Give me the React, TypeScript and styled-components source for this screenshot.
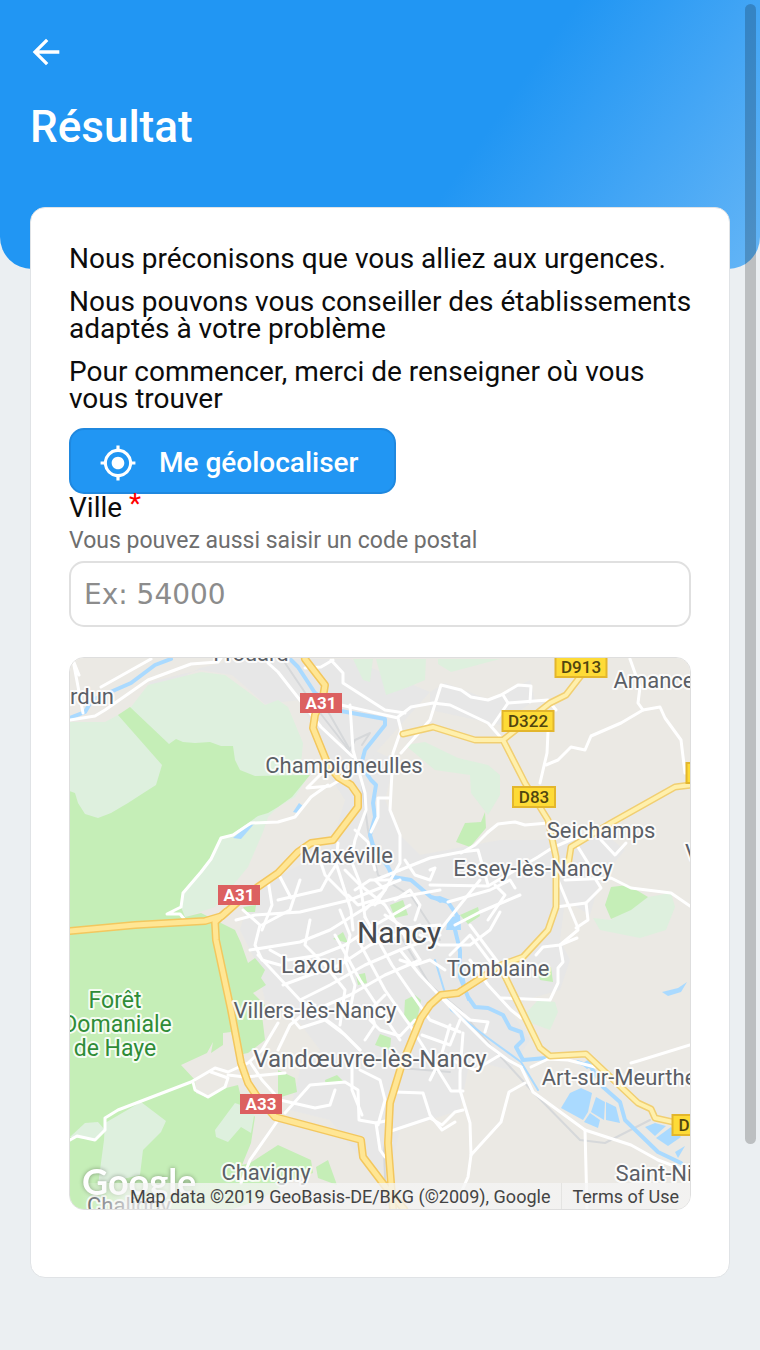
import React from "react";
import styled, { createGlobalStyle } from "styled-components";
import { MdArrowBack, MdMyLocation } from "react-icons/md";

const GlobalStyle = createGlobalStyle`
  *, *::before, *::after { box-sizing: border-box; }
  body {
    margin: 0;
    background: #ebeff2;
    color: #0c0c0c;
    font-family: Roboto, "Liberation Sans", sans-serif;
    overflow-x: hidden;
    scrollbar-width: none;
  }
`;

const Page = styled.div`
  min-height: 100vh;
  padding-bottom: 73px;
`;

const Header = styled.header`
  height: 269px;
  padding: 32px 30px 0;
  border-radius: 0 0 32px 32px;
  background: linear-gradient(125deg, #2196f3 0%, #2196f3 61%, #42a5f5 80%, #64b5f6 100%);
  color: #fff;
`;

const BackButton = styled.button`
  display: flex;
  margin: 0 0 0 -4px;
  padding: 0;
  border: 0;
  background: none;
  color: inherit;
  font-size: 40px;
  cursor: pointer;
`;

const Title = styled.h1`
  margin: 29px 0 0;
  font-size: 44px;
  line-height: 52px;
  font-weight: 500;
`;

const Card = styled.main`
  margin: -62px 30px 0;
  padding: 37px 38px 67px;
  border: 1px solid #e0e3e6;
  border-radius: 15px;
  background: #fff;
`;

const Paragraph = styled.p`
  margin: 0 -8px 16px 0;
  font-size: 28px;
  line-height: 27px;
`;

const LocateButton = styled.button`
  display: flex;
  align-items: center;
  gap: 22px;
  height: 66px;
  padding: 4px 35px 0 28px;
  border: 2px solid #1f88df;
  border-radius: 15px;
  background: #2196f3;
  color: #fff;
  font: 500 28px/32px Roboto, sans-serif;
  cursor: pointer;

  svg { font-size: 38px; }
`;

const Field = styled.div`
  display: flex;
  flex-direction: column;
`;

const Label = styled.label`
  font-size: 28px;
  line-height: 28px;
`;

const Required = styled.span`
  color: #f00;
  line-height: 0;
  vertical-align: 4px;
`;

const Hint = styled.span`
  margin: 4px 0 5px;
  color: #6e6e6e;
  font-size: 23px;
  line-height: 30px;
`;

const CityInput = styled.input`
  width: 100%;
  height: 66px;
  padding: 0 13px;
  border: 2px solid #e0e0e0;
  border-radius: 15px;
  background: #fff;
  color: #222;
  font: 28px "DejaVu Sans", sans-serif;

  &::placeholder { color: #8c8c8c; opacity: 1; }
`;

const MapFrame = styled.div`
  position: relative;
  height: 553px;
  margin-top: 30px;
  border: 1px solid #dedede;
  border-radius: 15px;
  overflow: hidden;
`;

const MapDrawing = styled.svg`
  display: block;
  width: 100%;
  height: 100%;
  font-family: Roboto, sans-serif;
`;

const Attribution = styled.div`
  position: absolute;
  right: 0;
  bottom: 0;
  display: flex;
  background: linear-gradient(90deg, rgba(245, 245, 245, 0), rgba(245, 245, 245, 0.75) 50px);
  color: #444;
  font-size: 18px;
  line-height: 24px;
  white-space: nowrap;
`;

const Credit = styled.span`
  padding: 2px 11px 0 50px;
`;

const TermsLink = styled.a`
  padding: 2px 11px 0 10px;
  border-left: 1px solid #e4e4e2;
  color: inherit;
  text-decoration: none;
`;

const ScrollThumb = styled.div`
  position: fixed;
  top: 4px;
  right: 4px;
  width: 11px;
  height: calc(100vh - 210px);
  border-radius: 6px;
  background: rgba(0, 0, 0, 0.2);
`;

const urban = [
  "330,730 395,760 385,800 400,835 420,855 500,840 540,840 600,830 625,850 600,880 590,915 565,900 560,940 570,960 560,990 525,1000 510,1010 530,1040 510,1070 470,1060 460,1110 400,1130 390,1170 370,1170 330,1120 290,1110 300,1070 320,1050 290,1010 265,1000 255,960 240,930 250,895 290,870 330,850 345,800 320,760",
  "140,700 200,668 240,659 350,659 430,692 405,720 360,770 330,765 300,700 265,704 232,675 200,670 150,682",
  "430,692 445,683 490,700 530,680 535,700 500,725 430,710",
];

const paleWoods = [
  "69,722 105,722 118,715 131,707 148,685 201,672 225,675 255,697 265,705 278,700 288,707 303,743 301,765 309,775 295,797 278,807 268,817 263,832 248,867 215,907 185,917 69,930",
  "353,659 363,680 370,682 373,659",
  "376,659 386,695 406,688 425,680 426,659",
  "438,664 451,672 500,659 438,659",
  "405,745 425,742 458,758 488,765 500,775 500,795 488,815 471,793 470,775 435,770",
  "593,918 611,920 648,897 671,893 675,907 666,930 640,938 600,930",
  "526,1013 538,1000 555,1002 558,1012 550,1030 531,1023",
];

const woods = [
  "118,715 130,707 169,744 176,739 183,742 195,743 210,742 221,746 233,746 235,760 240,770 255,776 310,775 292,797 278,807 268,813 258,816 231,835 221,838 211,860 183,893 181,907 185,917 201,913 215,920 235,930 241,943 248,963 255,958 265,970 261,978 266,985 253,993 265,1005 262,1015 265,1040 248,1053 238,1055 231,1032 223,1033 223,1045 211,1053 213,1042 207,1053 181,1065 195,1080 196,1093 208,1098 218,1090 238,1085 241,1097 255,1117 251,1143 242,1165 250,1163 278,1145 311,1160 313,1173 291,1180 260,1200 230,1210 69,1210 69,791 75,793 78,803 85,814 98,818 111,813 128,803 145,792 156,785 162,765",
  "456,842 465,823 481,822 485,812 486,828 470,847",
  "605,905 611,887 628,885 648,897 631,910 611,919",
  "390,905 403,900 408,915 395,918",
  "460,915 478,907 480,916 468,924",
  "405,1000 415,995 421,1000 416,1027 404,1017",
  "356,975 365,973 367,983 358,985",
  "375,1045 380,1034 391,1038 390,1050",
  "278,1070 295,1078 297,1092 278,1098",
  "325,1080 337,1075 343,1081 326,1085",
  "316,1167 328,1160 337,1185 318,1178",
  "538,973 551,967 553,982 540,980",
  "243,907 256,905 255,912 246,912",
  "333,939 343,932 348,943",
];

const clearings = [
  "105,1123 141,1102 166,1121 161,1132 143,1150 140,1175 98,1185 104,1140",
  "70,1137 85,1123 98,1122 105,1130 95,1140",
  "215,1130 235,1103 255,1110 251,1133 241,1127 228,1142 216,1137",
];

const lakes = [
  "561,1108 570,1093 581,1088 592,1093 588,1112 583,1120",
  "596,1097 605,1102 604,1120 591,1112",
  "606,1102 616,1107 620,1123 606,1120",
  "590,1113 600,1120 598,1128 584,1122",
  "645,1127 655,1123 666,1126 655,1136",
  "656,1138 671,1127 681,1137 668,1146",
  "662,992 678,988 687,982 681,992 668,996",
  "581,1064 588,1060 594,1065 587,1069",
  "233,838 246,827 254,824 241,839",
  "293,812 299,803 303,806 297,813",
  "446,930 448,918 460,915 461,930",
  "675,1152 685,1146 678,1158",
  "431,897 440,896 450,900 440,903",
];

const rivers = [
  "70,718 85,712 92,700 115,690 131,683 155,665 171,659",
  "291,660 298,667 315,693 341,711 385,719 385,725 365,750 361,765 371,780 376,785 373,803 375,817 370,835 373,845 388,867 393,877 411,880 431,897 448,902 458,917 455,930 460,950 460,977 468,997 475,1007 488,1008 503,1015 510,1028 521,1032 523,1040 516,1047 523,1060 546,1058",
  "578,1062 591,1067 603,1087 620,1102 625,1120 658,1152 681,1163",
];

const canals = [
  "435,960 445,993 451,1010 488,1038 521,1062 538,1090",
  "456,930 460,960 468,1000",
];

const rails = [
  "283,660 310,700 345,745 360,770 368,830 378,875 412,897 440,940 400,935 430,985 460,1010 490,1045 533,1092 580,1140 605,1143 650,1120",
  "296,665 330,715 350,750 355,740 370,733 362,745",
  "386,1205 384,1150 392,1100 400,1068 450,1072",
];

const streets = [
  "70,720 95,716 105,710 148,680 191,664 218,662 221,658",
  "101,687 151,659",
  "72,658 79,675 73,660 83,713",
  "268,663 278,672 321,727 353,757",
  "185,920 180,914 167,914 181,907 183,893 201,872 211,859 221,838 233,835 251,823 278,822 295,817 311,797 328,785",
  "345,762 320,775 307,788 330,786 340,780",
  "331,660 343,673 343,683 385,710 405,713",
  "305,668 321,667 333,660",
  "341,705 398,718 401,730 393,753 390,810 400,835 400,863 385,890 365,910",
  "398,717 411,707 433,703 450,705 488,723 503,740",
  "401,753 430,720 441,685 461,690 471,697 488,700 501,695 518,685 531,686 530,702",
  "493,725 508,703 548,700 556,710",
  "503,695 508,703",
  "350,705 353,750 365,793 366,810 355,840 351,860 360,883 365,917",
  "371,832 378,817 378,798 390,798",
  "355,830 368,842 375,870",
  "338,843 336,863 351,910 353,930",
  "278,900 321,890 328,877 338,862",
  "278,873 291,898",
  "630,659 640,687 638,703 643,710 660,707 665,718 681,740 685,773",
  "643,710 621,723 591,736 585,750 571,747 558,760 546,765",
  "548,732 547,753 540,783",
  "488,832 498,824 515,822 525,825 548,823",
  "461,853 475,845 488,832",
  "400,870 430,858 461,852 478,850 488,885",
  "430,885 488,886 538,857 552,848 575,838 600,835",
  "558,880 578,928",
  "565,880 611,878 631,888 671,893 690,906",
  "578,847 588,863",
  "601,840 615,855 626,843",
  "596,880 601,888 586,903 588,920 576,928",
  "556,907 586,903",
  "448,902 490,890 510,880 515,888",
  "455,925 480,912 520,895",
  "488,920 505,895 495,885",
  "521,1067 533,1092 585,1130 631,1145 658,1160 690,1172",
  "585,1130 587,1208",
  "525,1083 509,1092 501,1122 471,1155 470,1123 460,1090 460,1073 463,1033",
  "471,1155 468,1177 461,1193",
  "531,1067 548,1059 568,1060 595,1067",
  "631,1063 638,1061 690,1045",
  "470,960 488,985 511,1010 521,1018",
  "501,998 550,1000 558,983 558,968 563,962 560,945 578,930",
  "536,955 543,947 560,945 577,938",
  "521,1067 508,1060 488,1045 455,1012 420,975 400,950",
  "70,1140 77,1136 95,1140 105,1130 105,1118 118,1110 191,1082 215,1068 228,1072 248,1063 262,1050 278,1023",
  "193,1082 195,1090 208,1097 225,1087 228,1078 211,1072",
  "278,1120 250,1160 241,1183",
  "228,1075 245,1077 285,1073",
  "250,1062 262,1080 280,1100 315,1108 330,1105 335,1090",
  "285,1113 310,1085 345,1082 358,1090 359,1120 376,1123 390,1120",
  "376,1123 380,1150 385,1157",
  "388,1132 430,1118 442,1125 455,1112 463,1110",
  "395,1092 423,1093 430,1115 442,1130 455,1122",
  "358,940 385,990 411,1027 438,1070 451,1091 463,1091",
  "335,935 360,980 400,1040",
  "365,917 392,965 430,1020 460,1032",
  "250,950 300,942 330,930 370,905 400,897 440,890",
  "236,920 255,915 300,912 350,900 400,880",
  "243,910 260,925 255,945 262,960 280,965",
  "258,955 300,1000 340,1030 360,1050",
  "262,925 290,910 300,880",
  "268,880 272,905 262,930",
  "270,950 288,960 320,955 345,945 375,925 410,905",
  "283,985 310,975 340,965 370,945 420,925",
  "300,1000 330,985 365,965 400,950 440,935",
  "315,1010 350,995 385,975 420,960",
  "310,920 305,945 325,965 345,990 340,1025",
  "340,910 350,935 345,960 355,985 350,1010",
  "285,1010 300,1028 325,1020 345,1035 360,1050",
  "278,1050 290,1025 315,1005",
  "352,1060 352,1090 362,1115",
  "360,1070 380,1080 385,1100 378,1125",
  "370,1020 380,1030 400,1036 415,1020",
  "365,1040 375,1025 370,1010 385,995",
  "400,960 415,965 430,960 445,970",
  "385,915 405,928 440,925",
  "375,905 385,890 375,880 400,870",
  "405,860 415,875 430,880 435,868 430,870",
  "395,900 410,890 420,905 415,920",
  "422,1035 450,1045 460,1020",
  "440,1055 475,1070 500,1055",
  "430,1080 440,1060 450,1025",
  "440,995 470,1020 488,1022 485,1032",
  "420,935 440,945 470,945 490,930 500,912",
  "440,930 460,905 480,880",
  "450,955 470,935 500,975",
  "470,925 500,965",
  "345,870 360,885 385,905 420,960",
  "355,890 370,880 390,880",
  "348,895 358,905 375,900",
  "320,860 325,875 345,895",
];

const highways = [
  "305,659 325,685 323,697 315,715 313,728 328,765 338,777 351,785 358,795 358,807 333,840 311,843 298,852 278,873 255,889 240,900 222,916 205,921 135,925 69,931",
  "226,912 215,922 216,940 231,1010 241,1063 248,1083 256,1095 275,1117 361,1140 363,1157 388,1190 404,1209",
  "393,1209 388,1143 390,1103 401,1067 421,1018 430,1005 441,995 458,993 486,975",
];

const mainRoads = [
  "458,993 501,965 523,957 548,930 556,907 556,857 548,820 525,783 503,740 475,740 433,727 403,734",
  "503,740 550,703 566,695 583,673",
  "691,785 675,787 611,823 571,847 568,866",
  "501,968 540,1048 550,1056 586,1054 638,1103 651,1109 655,1118 691,1126",
];

type Place = { name: string; x: number; y: number; size?: number; color?: string };

const places: Place[] = [
  { name: "Frouard", x: 251, y: 661 },
  { name: "rdun", x: 92, y: 704 },
  { name: "Amance", x: 654, y: 688 },
  { name: "Champigneulles", x: 344, y: 773 },
  { name: "Seichamps", x: 601, y: 838 },
  { name: "Maxéville", x: 347, y: 863 },
  { name: "Essey-lès-Nancy", x: 533, y: 876 },
  { name: "V", x: 692, y: 860 },
  { name: "Nancy", x: 399, y: 943, size: 30, color: "#45484d" },
  { name: "Laxou", x: 312, y: 973, size: 23 },
  { name: "Tomblaine", x: 498, y: 976 },
  { name: "Villers-lès-Nancy", x: 315, y: 1018 },
  { name: "Vandœuvre-lès-Nancy", x: 370, y: 1067, size: 24 },
  { name: "Art-sur-Meurthe", x: 619, y: 1085 },
  { name: "Chavigny", x: 266, y: 1180 },
  { name: "Saint-Ni", x: 654, y: 1181 },
  { name: "Chaligny", x: 129, y: 1213 },
  { name: "Forêt", x: 115, y: 1008, size: 23, color: "#2f8c37" },
  { name: "Domaniale", x: 117, y: 1032, size: 23, color: "#2f8c37" },
  { name: "de Haye", x: 115, y: 1056, size: 23, color: "#2f8c37" },
];

type Shield = { name: string; x: number; y: number; w: number; motorway?: boolean };

const shields: Shield[] = [
  { name: "A31", x: 321, y: 703, w: 42, motorway: true },
  { name: "A31", x: 239, y: 895, w: 42, motorway: true },
  { name: "A33", x: 261, y: 1104, w: 42, motorway: true },
  { name: "D913", x: 581, y: 667, w: 51 },
  { name: "D322", x: 528, y: 721, w: 51 },
  { name: "D83", x: 534, y: 797, w: 42 },
  { name: "D2", x: 689, y: 1125, w: 33 },
  { name: "", x: 707, y: 773, w: 41 },
];

const Polygons = ({ shapes, fill }: { shapes: string[]; fill: string }) => (
  <g fill={fill}>{shapes.map((points) => <polygon key={points} points={points} />)}</g>
);

const Lines = ({ lines, color, width }: { lines: string[]; color: string; width: number }) => (
  <g fill="none" stroke={color} strokeWidth={width} strokeLinejoin="round" strokeLinecap="round">
    {lines.map((points) => <polyline key={points} points={points} />)}
  </g>
);

const NancyMap = () => (
  <MapDrawing viewBox="70 658 620 551" preserveAspectRatio="xMidYMid slice" role="img" aria-label="Nancy">
    <rect x="-400" y="600" width="1600" height="700" fill="#ebe9e4" />
    <Polygons shapes={urban} fill="#e7e7e7" />
    <Polygons shapes={paleWoods} fill="#def0de" />
    <Polygons shapes={woods} fill="#c5eeb7" />
    <Polygons shapes={clearings} fill="#def0de" />
    <Lines lines={rails} color="#d6d8da" width={2} />
    <Polygons shapes={lakes} fill="#aadaff" />
    <Lines lines={rivers} color="#aadaff" width={4} />
    <Lines lines={canals} color="#aadaff" width={2} />
    <Lines lines={streets} color="#ffffff" width={3} />
    <Lines lines={mainRoads} color="#f1cf72" width={7} />
    <Lines lines={mainRoads} color="#fff0ac" width={4} />
    <Lines lines={highways} color="#f3c75e" width={8} />
    <Lines lines={highways} color="#ffe694" width={5} />
    <g textAnchor="middle" stroke="#ffffff" strokeWidth="4" strokeLinejoin="round" paintOrder="stroke" strokeOpacity="0.85">
      {places.map((place) => (
        <text key={place.name} x={place.x} y={place.y} fontSize={place.size ?? 22} fill={place.color ?? "#5b5f66"}>
          {place.name}
        </text>
      ))}
    </g>
    {shields.map((shield) => (
      <g key={`${shield.name}-${shield.y}`}>
        <rect
          x={shield.x - shield.w / 2}
          y={shield.y - 10}
          width={shield.w}
          height={20}
          fill={shield.motorway ? "#dc6060" : "#fedb37"}
          stroke={shield.motorway ? "#d65c5c" : "#e3b62c"}
          strokeWidth={shield.motorway ? 0 : 2}
        />
        <text
          x={shield.x}
          y={shield.y + 6}
          textAnchor="middle"
          fontSize="17"
          fontWeight={shield.motorway ? 700 : 500}
          fill={shield.motorway ? "#fff" : "#51460f"}
        >
          {shield.name}
        </text>
      </g>
    ))}
    <text
      x="82"
      y="1195"
      fontFamily="Lato, sans-serif"
      fontSize="36"
      fontWeight="700"
      fill="#fff"
      style={{ filter: "drop-shadow(0 0 2px rgba(0,0,0,.35))" }}
    >
      Google
    </text>
  </MapDrawing>
);

export default function App() {
  return (
    <Page>
      <GlobalStyle />
      <Header>
        <BackButton type="button" aria-label="Retour">
          <MdArrowBack />
        </BackButton>
        <Title>Résultat</Title>
      </Header>
      <Card>
        <Paragraph>Nous préconisons que vous alliez aux urgences.</Paragraph>
        <Paragraph>Nous pouvons vous conseiller des établissements adaptés à votre problème</Paragraph>
        <Paragraph>Pour commencer, merci de renseigner où vous vous trouver</Paragraph>
        <LocateButton type="button">
          <MdMyLocation />
          Me géolocaliser
        </LocateButton>
        <Field>
          <Label htmlFor="city">
            Ville <Required>*</Required>
          </Label>
          <Hint id="city-hint">Vous pouvez aussi saisir un code postal</Hint>
          <CityInput id="city" type="text" placeholder="Ex: 54000" aria-describedby="city-hint" />
        </Field>
        <MapFrame>
          <NancyMap />
          <Attribution>
            <Credit>Map data ©2019 GeoBasis-DE/BKG (©2009), Google</Credit>
            <TermsLink href="#terms">Terms of Use</TermsLink>
          </Attribution>
        </MapFrame>
      </Card>
      <ScrollThumb aria-hidden="true" />
    </Page>
  );
}
